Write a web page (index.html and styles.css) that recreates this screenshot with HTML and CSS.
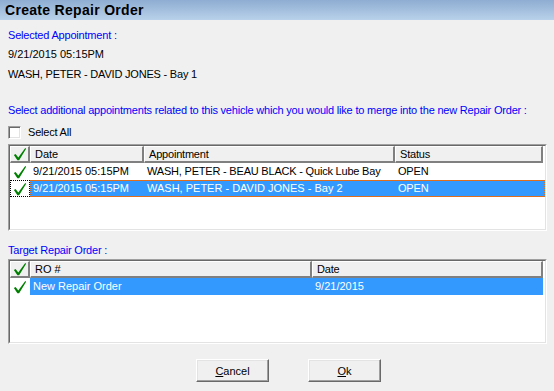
FILE: index.html
```html
<!DOCTYPE html>
<html lang="en">
<head>
    <meta charset="UTF-8">
    <title>Create Repair Order</title>
    <link rel="stylesheet" href="styles.css">
</head>
<body>

<div class="titlebar">Create Repair Order</div>

<div class="content">
    <div class="label blue first">Selected Appointment :</div>
    <div class="label date-line">9/21/2015 05:15PM</div>
    <div class="label wash-line">WASH, PETER - DAVID JONES - Bay 1</div>

    <div class="label blue instr">Select additional appointments related to this vehicle which you would like to merge into the new Repair Order :</div>

    <label class="select-all"><span class="checkbox"></span>Select All</label>

    <div class="grid grid-appts">
        <div class="grid-inner">
            <div class="row head">
                <div class="cell chk"><svg class="tick" viewBox="0 0 16 16"><polygon points="1,9 3,8 6,12 14,1 15,2 7,15 5,15"/></svg></div>
                <div class="cell">Date</div>
                <div class="cell">Appointment</div>
                <div class="cell">Status</div>
            </div>
            <div class="row">
                <div class="cell chk"><svg class="tick" viewBox="0 0 16 16"><polygon points="1,9 3,8 6,12 14,1 15,2 7,15 5,15"/></svg></div>
                <div class="cell">9/21/2015 05:15PM</div>
                <div class="cell">WASH, PETER - BEAU BLACK - Quick Lube Bay</div>
                <div class="cell">OPEN</div>
            </div>
            <div class="row selected focused">
                <div class="cell chk focus"><svg class="tick" viewBox="0 0 16 16"><polygon points="1,9 3,8 6,12 14,1 15,2 7,15 5,15"/></svg></div>
                <div class="sel">
                    <div class="cell">9/21/2015 05:15PM</div>
                    <div class="cell">WASH, PETER - DAVID JONES - Bay 2</div>
                    <div class="cell">OPEN</div>
                </div>
            </div>
        </div>
    </div>

    <div class="label blue target">Target Repair Order :</div>

    <div class="grid grid-ro">
        <div class="grid-inner">
            <div class="row head">
                <div class="cell chk"><svg class="tick" viewBox="0 0 16 16"><polygon points="1,9 3,8 6,12 14,1 15,2 7,15 5,15"/></svg></div>
                <div class="cell">RO #</div>
                <div class="cell">Date</div>
            </div>
            <div class="row selected">
                <div class="cell chk"><svg class="tick" viewBox="0 0 16 16"><polygon points="1,9 3,8 6,12 14,1 15,2 7,15 5,15"/></svg></div>
                <div class="sel">
                    <div class="cell">New Repair Order</div>
                    <div class="cell">9/21/2015</div>
                </div>
            </div>
        </div>
    </div>

    <div class="buttons">
        <button><u>C</u>ancel</button>
        <button><u>O</u>k</button>
    </div>
</div>

</body>
</html>
```

FILE: styles.css
```css
body { margin: 0; background: #f0f0f0; font-family: "Liberation Sans", Arial, sans-serif; font-size: 11px; letter-spacing: -0.2px; color: #000; }
.titlebar { height: 20px; line-height: 21px; padding-left: 5px; font-size: 14px; font-weight: bold; letter-spacing: 0.3px; background: linear-gradient(#8eadd2, #b9d1ea); }
.content { padding: 0 7px 0 8px; }
.label { line-height: 14px; white-space: nowrap; }
.blue { color: #0000ff; }
.first { margin-top: 8px; }
.date-line { margin-top: 5px; letter-spacing: 0; }
.wash-line { margin-top: 6px; }
.instr { margin-top: 22px; }
.target { margin-top: 12px; }
.select-all { display: flex; align-items: center; margin-top: 8px; height: 14px; }
.checkbox { width: 9px; height: 9px; margin-right: 7px; background: #fff; border: 1px solid; border-color: #a0a0a0 #fff #fff #a0a0a0; box-shadow: inset 1px 1px #696969, inset -1px -1px #e3e3e3; padding: 1px; }

.grid { border: 1px solid; border-color: #a0a0a0 #fff #fff #a0a0a0; }
.grid-inner { border: 1px solid; border-color: #696969 #e3e3e3 #e3e3e3 #696969; background: #fff; }
.grid-appts { margin-top: 5px; height: 85px; }
.grid-appts .grid-inner { height: 83px; }
.grid-ro { margin-top: 2px; height: 83px; }
.grid-ro .grid-inner { height: 81px; }

.row { display: flex; height: 17px; line-height: 17px; white-space: nowrap; }
.cell { box-sizing: border-box; padding-left: 3px; overflow: hidden; }
.cell.chk { width: 20px; padding: 0; display: flex; align-items: center; justify-content: center; }
.head .cell { background: #f0f0f0; border-top: 1px solid #fff; border-left: 1px solid #fff; border-right: 2px solid #808080; border-bottom: 2px solid #808080; line-height: 14px; padding-left: 4px; }
.head .cell.chk { padding: 0; }

.grid-appts .row > .cell:nth-child(2), .grid-appts .sel .cell:nth-child(1) { width: 114px; }
.grid-appts .row > .cell:nth-child(3), .grid-appts .sel .cell:nth-child(2) { width: 251px; }
.grid-appts .row > .cell:nth-child(4), .grid-appts .sel .cell:nth-child(3) { width: 148px; }
.grid-ro .row > .cell:nth-child(2), .grid-ro .sel .cell:nth-child(1) { width: 282px; }
.grid-ro .row > .cell:nth-child(3), .grid-ro .sel .cell:nth-child(2) { width: 231px; }
.row .cell:nth-child(2), .sel .cell:first-child { letter-spacing: 0; }

.tick { width: 14px; height: 14px; fill: #008000; }
.sel { display: flex; background: #3399ff; color: #fff; }
.focused .sel { border: 1px dotted #e0701f; box-sizing: border-box; }
.focused .sel .cell { line-height: 15px; padding-left: 2px; }
.cell.focus { border: 1px dotted #000; }

.buttons { display: flex; gap: 39px; padding-left: 188px; margin-top: 15px; }
button { width: 73px; height: 23px; padding: 0; font-family: inherit; font-size: 11px; letter-spacing: 0; color: #000; background: #f0f0f0; border: 1px solid; border-color: #fff #696969 #696969 #fff; box-shadow: inset -1px -1px #a0a0a0, inset 1px 1px #e3e3e3; }
```
